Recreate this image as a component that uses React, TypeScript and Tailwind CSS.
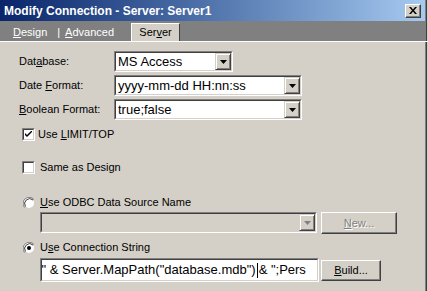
const font = { fontFamily: '"Liberation Sans", Arial, sans-serif' }

function Arrow({ disabled }: { disabled?: boolean }) {
  return (
    <svg width="7" height="4" viewBox="0 0 7 4">
      <path d="M0 0H7L3.5 4Z" fill={disabled ? '#808080' : '#000'} />
    </svg>
  )
}

function Combo({ width, value, disabled }: { width: string; value?: string; disabled?: boolean }) {
  return (
    <div className={`${width} shrink-0 h-[21px] border border-t-[#808080] border-l-[#808080] border-b-white border-r-white`}>
      <div className={`h-full flex border border-t-[#404040] border-l-[#404040] border-b-[#d4d0c8] border-r-[#d4d0c8] ${disabled ? 'bg-[#d4d0c8]' : 'bg-white'}`}>
        <div className="flex-1 pl-[2px] text-[13px] leading-[17px] text-black whitespace-nowrap overflow-hidden">{value}</div>
        <div className="w-[16px] h-full flex items-center justify-center bg-[#d4d0c8] border border-t-[#d4d0c8] border-l-[#d4d0c8] border-b-[#404040] border-r-[#404040] shadow-[inset_1px_1px_0_#fff,inset_-1px_-1px_0_#808080]">
          <Arrow disabled={disabled} />
        </div>
      </div>
    </div>
  )
}

function Check({ checked }: { checked?: boolean }) {
  return (
    <div className="w-[13px] h-[13px] border border-t-[#808080] border-l-[#808080] border-b-white border-r-white">
      <div className="w-full h-full bg-white border border-t-[#404040] border-l-[#404040] border-b-[#d4d0c8] border-r-[#d4d0c8] flex items-center justify-center">
        {checked && (
          <svg width="7" height="7" viewBox="0 0 7 7">
            <path d="M0 2V4L2 6L7 1V-1L2 4Z" fill="#000" />
          </svg>
        )}
      </div>
    </div>
  )
}

function Radio({ checked }: { checked?: boolean }) {
  return (
    <svg width="12" height="12" viewBox="0 0 12 12">
      <path d="M11 2.5A6 6 0 0 0 1.5 10.5" stroke="#808080" strokeWidth="1" fill="none" />
      <circle cx="6" cy="6" r="5" fill="#fff" />
      <path d="M10 3A5 5 0 0 0 2.5 9.5" stroke="#404040" strokeWidth="1" fill="none" />
      {checked && <circle cx="6" cy="6" r="2" fill="#000" />}
    </svg>
  )
}

function Button({ className, children, disabled }: { className: string; children: React.ReactNode; disabled?: boolean }) {
  return (
    <div className={`${className} shrink-0 bg-[#d4d0c8] border border-t-white border-l-white border-b-[#404040] border-r-[#404040] shadow-[inset_-1px_-1px_0_#808080] flex items-center justify-center text-[11px] ${disabled ? 'text-[#808080] [text-shadow:1px_1px_0_#fff]' : 'text-black'}`}>
      {children}
    </div>
  )
}

export default function App() {
  return (
    <div className="w-[428px] h-[291px] overflow-hidden bg-[#d4d0c8] shadow-[inset_-1px_0_0_#d4d0c8,inset_-2px_0_0_#404040,inset_-3px_0_0_#808080]" style={font}>
      <div className="h-[21px] mr-[3px] flex items-center justify-between pl-[4px] pr-[4px] bg-gradient-to-r from-[#0a246a] to-[#a6caf0]">
        <span className="text-white font-bold text-[12px] whitespace-nowrap">Modify Connection - Server: Server1</span>
        <div className="w-[16px] h-[14px] bg-[#d4d0c8] border border-t-white border-l-white border-b-[#404040] border-r-[#404040] shadow-[inset_-1px_-1px_0_#808080] flex items-center justify-center">
          <svg width="8" height="7" viewBox="0 0 8 7">
            <path d="M0 0H2L4 2.5L6 0H8L5 3.5L8 7H6L4 4.5L2 7H0L3 3.5Z" fill="#000" />
          </svg>
        </div>
      </div>

      <div className="h-[20px] mr-[3px] bg-[#808080] flex items-end text-[11px] text-white">
        <div className="h-[18px] flex items-center pl-[13px]">
          <span><u>D</u>esign</span>
          <span className="ml-[10px]">|</span>
          <span className="ml-[5px]"><u>A</u>dvanced</span>
        </div>
        <div className="ml-[17px] w-[49px] h-[18px] bg-[#d4d0c8] border-t border-l border-white border-r border-r-[#404040] flex items-center justify-center text-black">
          <span>Ser<u>v</u>er</span>
        </div>
      </div>

      <div className="border-t border-white pt-[9px] text-[11px] text-black">
        <div className="flex items-center h-[21px]">
          <span className="pl-[19px] w-[114px]">Dat<u>a</u>base:</span>
          <Combo width="w-[119px]" value="MS Access" />
        </div>
        <div className="flex items-center h-[21px] mt-[3px]">
          <span className="pl-[19px] w-[114px]">Date <u>F</u>ormat:</span>
          <Combo width="w-[188px]" value="yyyy-mm-dd HH:nn:ss" />
        </div>
        <div className="flex items-center h-[21px] mt-[3px]">
          <span className="pl-[19px] w-[114px]"><u>B</u>oolean Format:</span>
          <Combo width="w-[188px]" value="true;false" />
        </div>

        <div className="flex items-center h-[15px] mt-[7px] pl-[22px]">
          <Check checked />
          <span className="ml-[3px]">Use <u>L</u>IMIT/TOP</span>
        </div>
        <div className="flex items-center h-[15px] mt-[18px] pl-[22px]">
          <Check />
          <span className="ml-[5px]">Same as Design</span>
        </div>
        <div className="flex items-center h-[15px] mt-[20px] pl-[23px]">
          <Radio />
          <span className="ml-[5px]"><u>U</u>se ODBC Data Source Name</span>
        </div>
        <div className="flex items-start h-[22px] mt-[2px] pl-[40px]">
          <Combo width="w-[277px]" disabled />
          <Button className="ml-[4px] w-[76px] h-[22px]" disabled><span><u>N</u>ew...</span></Button>
        </div>
        <div className="flex items-center h-[15px] mt-[6px] pl-[23px]">
          <Radio checked />
          <span className="ml-[5px]">U<u>s</u>e Connection String</span>
        </div>
        <div className="flex items-center h-[24px] mt-[3px] pl-[40px]">
          <div className="w-[279px] shrink-0 h-[24px] overflow-hidden border border-t-[#808080] border-l-[#808080] border-b-white border-r-white">
            <div className="h-full flex items-center bg-white border border-t-[#404040] border-l-[#404040] border-b-[#d4d0c8] border-r-[#d4d0c8] overflow-hidden whitespace-nowrap text-[13px]">
              <span className="ml-[-4px]">;" &amp; Server.MapPath("database.mdb")</span>
              <span className="inline-block shrink-0 w-px h-[15px] bg-black mx-[1px]"></span>
              <span>&amp; ";Pers</span>
            </div>
          </div>
          <Button className="ml-[2px] w-[60px] h-[21px]"><span><u>B</u>uild...</span></Button>
        </div>
      </div>
    </div>
  )
}
